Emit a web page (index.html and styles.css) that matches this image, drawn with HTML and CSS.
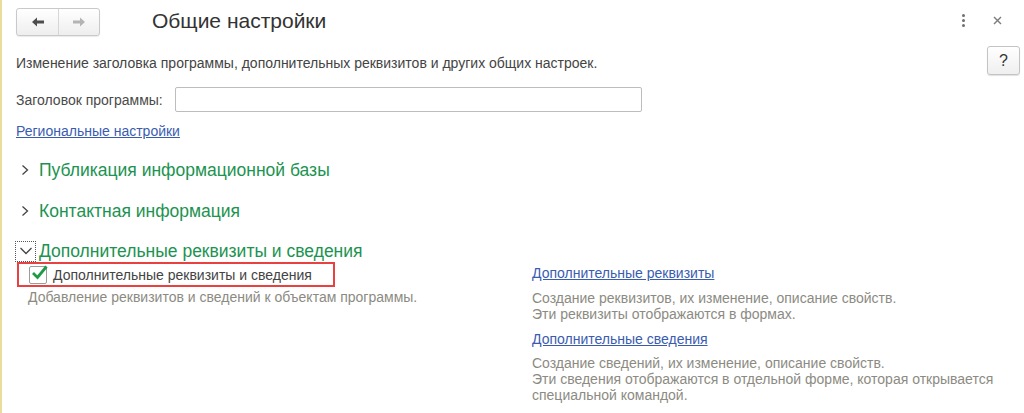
FILE: index.html
```html
<!DOCTYPE html>
<html lang="ru">
<head>
    <meta charset="UTF-8">
    <title>Общие настройки</title>
    <link rel="stylesheet" href="styles.css">
</head>
<body>
    <div class="window">
        <!-- Заголовок окна -->
        <div class="titlebar">
            <div class="nav">
                <button class="nav-btn" title="Назад">
                    <svg width="14" height="12" viewBox="0 0 14 12"><path d="M1 6 L6 1.5 L6 4.5 L13 4.5 L13 7.5 L6 7.5 L6 10.5 Z" fill="#4d4d4d"/></svg>
                </button>
                <button class="nav-btn" title="Вперед">
                    <svg width="14" height="12" viewBox="0 0 14 12"><path d="M13 6 L8 1.5 L8 4.5 L1 4.5 L1 7.5 L8 7.5 L8 10.5 Z" fill="#b4b4b4"/></svg>
                </button>
            </div>
            <h1 class="title">Общие настройки</h1>
            <div class="wnd-actions">
                <span class="kebab"><i></i><i></i><i></i></span>
                <span class="close">
                    <svg width="9" height="9" viewBox="0 0 9 9"><path d="M1 1 L8 8 M8 1 L1 8" stroke="#7a7a7a" stroke-width="1.4"/></svg>
                </span>
            </div>
        </div>

        <div class="intro">
            <p>Изменение заголовка программы, дополнительных реквизитов и других общих настроек.</p>
            <button class="help">?</button>
        </div>

        <div class="field-row">
            <label for="appTitle">Заголовок программы:</label>
            <input id="appTitle" type="text">
        </div>

        <div class="link-row"><a href="#" class="link">Региональные настройки</a></div>

        <div class="group">
            <span class="chev"><svg width="8" height="12" viewBox="0 0 8 12"><path d="M1.5 1.5 L6.5 6 L1.5 10.5" fill="none" stroke="#444" stroke-width="1.3"/></svg></span>
            Публикация информационной базы
        </div>
        <div class="group">
            <span class="chev"><svg width="8" height="12" viewBox="0 0 8 12"><path d="M1.5 1.5 L6.5 6 L1.5 10.5" fill="none" stroke="#444" stroke-width="1.3"/></svg></span>
            Контактная информация
        </div>
        <div class="group group-open">
            <span class="chev chev-focus"><svg width="14" height="8" viewBox="0 0 14 8"><path d="M1.5 1 L7 6.5 L12.5 1" fill="none" stroke="#444" stroke-width="1.3"/></svg></span>
            Дополнительные реквизиты и сведения
        </div>

        <div class="group-body">
            <div class="col-left">
                <label class="check-row">
                    <span class="checkbox">
                        <svg width="17" height="15" viewBox="0 0 17 15"><path d="M2 8 L6.5 12.5 L15.5 1.5" fill="none" stroke="#1f9a45" stroke-width="2.8"/></svg>
                    </span>
                    Дополнительные реквизиты и сведения
                </label>
                <p class="hint">Добавление реквизитов и сведений к объектам программы.</p>
            </div>
            <div class="col-right">
                <a href="#" class="link">Дополнительные реквизиты</a>
                <p class="hint">Создание реквизитов, их изменение, описание свойств.<br>Эти реквизиты отображаются в формах.</p>
                <a href="#" class="link link-second">Дополнительные сведения</a>
                <p class="hint">Создание сведений, их изменение, описание свойств.<br>Эти сведения отображаются в отдельной форме, которая открывается<br>специальной командой.</p>
            </div>
        </div>
    </div>
</body>
</html>
```

FILE: styles.css
```css
/* Окно настроек */
body {
    margin: 0;
    background: #fff;
    font-family: "Liberation Sans", Arial, sans-serif;
    color: #444;
}
.window {
    height: 413px;
    box-sizing: border-box;
    border-left: 2px solid #eadc9c;
    padding: 0 4px 0 14px;
    overflow: hidden;
}

/* Верхняя строка */
.titlebar {
    display: flex;
    align-items: flex-start;
    height: 44px;
}
.nav {
    display: flex;
    margin-top: 8px;
    border: 1px solid #c9c9c9;
    border-radius: 3px;
    background: linear-gradient(#ffffff, #eeeeee);
    box-shadow: 0 1px 1px rgba(0, 0, 0, 0.08);
}
.nav-btn {
    width: 41px;
    height: 26px;
    border: none;
    background: none;
    padding: 0;
    display: flex;
    align-items: center;
    justify-content: center;
}
.nav-btn + .nav-btn {
    border-left: 1px solid #d6d6d6;
}
.title {
    margin: 9px 0 0 52px;
    font-size: 21px;
    font-weight: normal;
    line-height: 24px;
    color: #333;
}
.wnd-actions {
    margin-left: auto;
    display: flex;
    align-items: center;
    height: 40px;
}
.kebab {
    display: flex;
    flex-direction: column;
    gap: 2px;
    margin-right: 28px;
}
.kebab i {
    width: 3px;
    height: 3px;
    border-radius: 50%;
    background: #6f6f6f;
}
.close {
    display: flex;
    margin-right: 18px;
}

/* Описание и справка */
.intro {
    display: flex;
    justify-content: space-between;
    align-items: flex-start;
    margin-top: 2px;
}
.intro p {
    margin: 9px 0 0;
    font-size: 14px;
    line-height: 16px;
    color: #444;
}
.help {
    width: 33px;
    height: 29px;
    border: 1px solid #c4c4c4;
    border-radius: 3px;
    background: linear-gradient(#ffffff, #efefef);
    box-shadow: 0 1px 1px rgba(0, 0, 0, 0.12);
    font-family: "Liberation Sans", Arial, sans-serif;
    font-size: 16px;
    color: #333;
    padding: 0;
}

/* Поле ввода */
.field-row {
    display: flex;
    align-items: center;
    margin-top: 12px;
    height: 25px;
}
.field-row label {
    font-size: 14px;
    color: #4a4a4a;
    margin-right: 12px;
}
.field-row input {
    width: 467px;
    height: 25px;
    box-sizing: border-box;
    border: 1px solid #bdbdbd;
    border-radius: 2px;
    margin-left: 0;
}

.link-row {
    margin-top: 11px;
    line-height: 16px;
}
.link {
    font-size: 14px;
    line-height: 16px;
    color: #3a5cb0;
    text-decoration: underline;
}

/* Группы */
.group {
    display: flex;
    align-items: center;
    margin-top: 21px;
    height: 20px;
    font-size: 17.5px;
    color: #1c9350;
}
.chev {
    width: 18px;
    margin-left: 5px;
    display: flex;
    align-items: center;
}
.group-open {
    margin-top: 20px;
}
.chev-focus {
    margin-left: 0;
    width: 19px;
    height: 19px;
    margin-right: 4px;
    outline: 1px dotted #555;
    justify-content: center;
}

.group-body {
    display: grid;
    grid-template-columns: 516px 1fr;
    margin-top: 1px;
}
.check-row {
    display: flex;
    align-items: center;
    width: 318px;
    height: 25px;
    box-sizing: border-box;
    margin-left: 1px;
    border: 2px solid #e8413f;
    font-size: 14px;
    color: #444;
}
.checkbox {
    width: 16px;
    height: 16px;
    border: 1px solid #9c9c9c;
    border-radius: 2px;
    margin: 0 6px 0 10px;
    position: relative;
}
.checkbox svg {
    position: absolute;
    left: 1px;
    top: -2px;
}
.hint {
    margin: 2px 0 0 12px;
    font-size: 14px;
    line-height: 16px;
    color: #8c8b82;
}
.col-right {
    padding-top: 2px;
}
.col-right .hint {
    margin: 8px 0 0;
}
.col-right .hint:last-child {
    margin-top: 7px;
}
.col-right .link {
    display: inline-block;
}
.link-second {
    margin-top: 9px;
}
```
